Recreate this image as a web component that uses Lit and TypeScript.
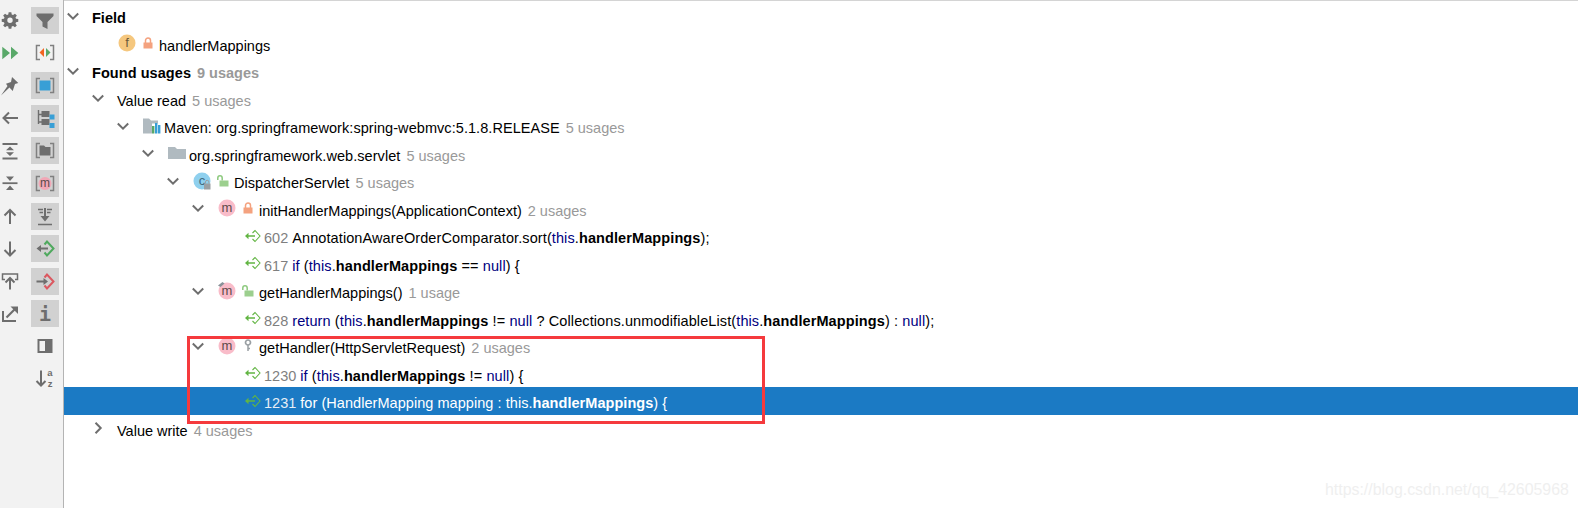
import { LitElement, html, css, svg } from "lit";
import { customElement } from "lit/decorators.js";

const G = "#6e6e6e";
const ic = (c: unknown) => html`<svg class="ov" width="20" height="20" viewBox="0 0 20 20">${c}</svg>`;
const bx = (c: unknown) => html`<svg width="28" height="27" viewBox="0 0 28 27">${c}</svg>`;

const brackets = svg`<path d="M9 6.500H5.500v14H9M19 6.500h3.500v14H19" fill="none" stroke="#808080" stroke-width="1.500"/>`;

const col1 = [
  ic(svg`<g transform="translate(1 1.200) scale(.9)"><path fill-rule="evenodd" fill="${G}" d="M8.500 1.500h3l.4 2.500 1.500.6 2.100-1.500 2.100 2.100-1.500 2.100.6 1.500 2.500.4v3l-2.500.4-.6 1.500 1.500 2.100-2.100 2.100-2.100-1.500-1.500.6-.4 2.500h-3l-.4-2.500-1.500-.6-2.100 1.500-2.100-2.100 1.500-2.100-.6-1.500-2.500-.4v-3l2.500-.4.6-1.500-1.500-2.100 2.100-2.100 2.100 1.500 1.500-.6zM10 7.400a3 3 0 1 0 0 6 3 3 0 0 0 0-6z" transform="translate(0 -.4)"/></g>`),
  ic(svg`<path fill="#59a869" d="M2.300 3.800l7.700 6.200-7.700 6.200zM11 3.800l7.300 6.200-7.300 6.200z"/>`),
  ic(svg`<path fill="${G}" d="M12 1l6.300 6-3.300 1-2.300 7-3.200-3.500L1 19.400l6.500-9.400L6 7.700 11 6z"/>`),
  ic(svg`<path fill="none" stroke="${G}" stroke-width="2" d="M18 10H3.500M9 4.500L3.500 10 9 15.500"/>`),
  ic(svg`<path fill="none" stroke="${G}" stroke-width="1.800" d="M2.500 3h15M2.500 17.500h15"/><path fill="${G}" d="M10 5.500l4 3.700H6zM10 15l-4-3.700h8z"/>`),
  ic(svg`<path fill="none" stroke="${G}" stroke-width="1.800" d="M2.500 10.200h15"/><path fill="${G}" d="M6 3.500h8l-4 4.500zM10 12.500l4 4.500H6z"/>`),
  ic(svg`<path fill="none" stroke="${G}" stroke-width="2" d="M10 18V4M4.500 9.500L10 4l5.500 5.500"/>`),
  ic(svg`<path fill="none" stroke="${G}" stroke-width="2" d="M10 2.500v14M4.500 11l5.500 5.500 5.500-5.500"/>`),
  ic(svg`<path fill="none" stroke="${G}" stroke-width="1.500" d="M5 8.500H2.500V3h15v5.500H15"/><path fill="none" stroke="${G}" stroke-width="2" d="M10 18.500V7.500M5.500 11.500L10 7l4.500 4.500"/>`),
  ic(svg`<path fill="none" stroke="${G}" stroke-width="2" d="M3 7v10h13"/><path fill="none" stroke="${G}" stroke-width="2.200" d="M6.500 13.500L16 4"/><path fill="${G}" d="M10.500 2.500H18V10z"/>`),
];

const col2 = [
  { on: true, i: bx(svg`<path fill="${G}" d="M5.500 6.500h17v2.500l-6 6v7l-5-2.500V15l-6-6z"/>`) },
  { on: false, i: bx(svg`${brackets}<path fill="#f26522" d="M13 9l-4.500 4.500L13 18z"/><path fill="#59a869" d="M15 9l4.500 4.500L15 18z"/>`) },
  { on: true, i: bx(svg`${brackets}<rect x="8.500" y="8.500" width="11" height="10" fill="#389fd6"/>`) },
  { on: true, i: bx(svg`<path fill="none" stroke="${G}" stroke-width="1.400" d="M7.500 5v14M7.500 9.500H11M7.500 17H11"/><rect x="10.500" y="6" width="8" height="6" fill="${G}"/><rect x="10.500" y="14" width="8" height="6" fill="${G}"/><rect x="18.500" y="9.500" width="5" height="5" fill="#389fd6"/><rect x="18.500" y="18" width="5" height="5" fill="#389fd6"/>`) },
  { on: true, i: bx(svg`${brackets}<path fill="${G}" d="M8.500 8.500h4.500l1.500 1.500h5v8.500h-11z"/>`) },
  { on: true, i: bx(svg`${brackets}<circle cx="14" cy="13.500" r="6.500" fill="#f1a7b6"/><text x="14" y="17" text-anchor="middle" class="svgt" fill="#5a4a4a" font-size="12">m</text>`) },
  { on: true, i: bx(svg`<path fill="none" stroke="${G}" stroke-width="1.500" d="M7 21.500h14M7 6.500h5M16 6.500h5M8.500 9.500h3.500M16 9.500h3.500"/><path fill="${G}" d="M13 5h2v8h3.500L14 18.500 9.500 13H13z"/>`) },
  { on: true, i: bx(svg`<path fill="none" stroke="#4fa95e" stroke-width="2" d="M13.500 9.500L16 6.500l6.500 7-6.500 7-2.500-3"/><path fill="${G}" d="M10 10v2.500h7v2h-7V17l-4.500-3.500z"/>`) },
  { on: true, i: bx(svg`<path fill="none" stroke="#db5860" stroke-width="2" d="M13.500 9.500L16 6.500l6.500 7-6.500 7-2.500-3"/><path fill="${G}" d="M12.500 10v2.500h-7v2h7V17l4.500-3.500z"/>`) },
  { on: true, i: bx(svg`<text x="14" y="21" text-anchor="middle" class="svgi" fill="${G}" font-size="20">i</text>`) },
  { on: false, i: bx(svg`<rect x="6.500" y="6" width="15" height="14" fill="${G}"/><rect x="8.500" y="8" width="5.500" height="10" fill="#f2f2f2"/>`) },
  { on: false, i: bx(svg`<path fill="none" stroke="${G}" stroke-width="2" d="M10 4.500v15M5.500 15L10 19.500l4.500-4.500"/><text x="19" y="9.500" text-anchor="middle" class="svgt svgb" fill="${G}" font-size="9.500">a</text><text x="19" y="20.500" text-anchor="middle" class="svgt svgb" fill="${G}" font-size="9.500">z</text>`) },
];

const lockRed = html`<svg width="10" height="12" viewBox="0 0 10 12"><path fill="none" stroke="#f4a27f" stroke-width="1.500" d="M2.500 6V3.500a2.500 2.500 0 0 1 5 0V6"/><rect x="0.500" y="5.500" width="9" height="6" fill="#f4a27f"/></svg>`;
const lockOpen = html`<svg width="12" height="12" viewBox="0 0 12 12"><path fill="none" stroke="#8cc97d" stroke-width="1.500" d="M.8 5V3a2.200 2.200 0 0 1 4.400 0v2.500"/><rect x="2.500" y="5.500" width="9" height="6" fill="#9ccf8e"/></svg>`;
const key = html`<svg width="8" height="13" viewBox="0 0 8 13"><circle cx="4" cy="3.500" r="2.500" fill="none" stroke="#9aa0a4" stroke-width="1.700"/><path d="M4 6v6M4 9.500h2" fill="none" stroke="#9aa0a4" stroke-width="1.500"/></svg>`;

const badge = (letter: string, fill: string, ink: string, extra: unknown = "") => html`<svg width="18" height="18" viewBox="0 0 18 18"><circle cx="9" cy="9" r="8.500" fill="${fill}"/><text x="9" y="13" text-anchor="middle" class="svgt" fill="${ink}" font-size="13">${letter}</text>${extra}</svg>`;
const bM = (pin = false) => badge("m", "#f9bcc9", "#5e4a4a", pin ? svg`<path d="M0 3.500L4.500 0l2 1.500-4 3.500z" fill="#8a9299"/>` : "");
const bF = badge("f", "#f5c77e", "#6b5a3a");
const bC = badge("c", "#8fd0ee", "#3f6a80", svg`<rect x="11" y="11.500" width="6.500" height="6" fill="#9aa0a4"/><path d="M12.500 11.500V10a1.700 1.700 0 0 1 3.400 0v1.500" fill="none" stroke="#9aa0a4"/>`);
const maven = html`<svg width="18" height="18" viewBox="0 0 18 18"><path fill="#b0bac0" d="M0 1.500h6l2 2h7v3H9v10H0z"/><rect x="9" y="9" width="2.400" height="7.500" fill="#59a869"/><rect x="12" y="6" width="2.400" height="10.500" fill="#389fd6"/><rect x="15" y="8" width="2.400" height="8.500" fill="#389fd6"/></svg>`;
const folder = html`<svg width="18" height="18" viewBox="0 0 18 18"><path fill="#b0bac0" d="M0 3h7l2 2h9v10H0z"/></svg>`;
const usageIc = html`<svg width="16" height="14" viewBox="0 0 16 14"><path fill="none" stroke="#62b543" stroke-width="1.100" d="M7.500 4L10 1.500 15 7l-5 5.500L7.500 10"/><path fill="#62b543" d="M3.500 3.800v2.500H10v1.400H3.500v2.500L0 7z"/></svg>`;

const B = (t: string) => html`<b>${t}</b>`;
const K = (t: string) => html`<span class="kw">${t}</span>`;
const HM = B("handlerMappings");

type Row = {
  d: number; open?: boolean; closed?: boolean; icon?: unknown; vis?: unknown; kind?: string;
  label?: unknown; bold?: boolean; n?: string; sel?: boolean; line?: string; code?: unknown; wide?: boolean;
};

const rows: Row[] = [
  { d: 0, open: true, label: "Field", bold: true },
  { d: 1, kind: "member", icon: bF, vis: lockRed, label: "handlerMappings" },
  { d: 0, open: true, label: "Found usages", bold: true, n: "9 usages", wide: true },
  { d: 1, open: true, label: "Value read", n: "5 usages" },
  { d: 2, open: true, kind: "file", icon: maven, label: "Maven: org.springframework:spring-webmvc:5.1.8.RELEASE", n: "5 usages", wide: true },
  { d: 3, open: true, kind: "file", icon: folder, label: "org.springframework.web.servlet", n: "5 usages", wide: true },
  { d: 4, open: true, kind: "member", icon: bC, vis: lockOpen, label: "DispatcherServlet", n: "5 usages", wide: true },
  { d: 5, open: true, kind: "member", icon: bM(), vis: lockRed, label: "initHandlerMappings(ApplicationContext)", n: "2 usages" },
  { d: 6, line: "602", code: html`AnnotationAwareOrderComparator.sort(${K("this")}.${HM});` },
  { d: 6, line: "617", code: html`${K("if")} (${K("this")}.${HM} == ${K("null")}) {` },
  { d: 5, open: true, kind: "member", icon: bM(true), vis: lockOpen, label: "getHandlerMappings()", n: "1 usage" },
  { d: 6, line: "828", code: html`${K("return")} (${K("this")}.${HM} != ${K("null")} ? Collections.unmodifiableList(${K("this")}.${HM}) : ${K("null")});` },
  { d: 5, open: true, kind: "member", icon: bM(), vis: key, label: "getHandler(HttpServletRequest)", n: "2 usages" },
  { d: 6, line: "1230", code: html`${K("if")} (${K("this")}.${HM} != ${K("null")}) {` },
  { d: 6, sel: true, line: "1231", code: html`${K("for")} (HandlerMapping mapping : ${K("this")}.${HM}) {` },
  { d: 1, closed: true, label: "Value write", n: "4 usages" },
];

@customElement("app-root")
export class AppRoot extends LitElement {
  static styles = css`
    :host { display: block; height: 508px; overflow: hidden; position: relative; background: #fff;
      font-family: "Liberation Sans", Arial, sans-serif; font-size: 14.5px; color: #000; }
    .page { display: flex; height: 100%; }
    .side { width: 63px; height: 504px; flex: none; box-sizing: content-box; background: #f2f2f2; border-right: 1px solid #b4b4b4;
      padding-top: 4px; display: grid; grid-template-columns: 20px 28px; column-gap: 11px; align-content: start; }
    .col { display: flex; flex-direction: column; }
    .cell { height: 32.63px; display: flex; align-items: center; justify-content: center; }
    .ov { overflow: visible; }
    .tool { width: 28px; height: 27px; display: block; }
    .tool svg { display: block; }
    .tool.on { background: #d1d1d1; }
    .tree { flex: 1; min-width: 0; border-top: 1px solid #d4d4d4; padding-top: 1px; }
    .row { height: 27.5px; display: flex; align-items: center; white-space: pre; }
    .row.sel { background: #1b7ac4; color: #fff; }
    .chev { width: 16px; height: 16px; flex: none; }
    .chev svg { display: block; }
    .slot { flex: none; display: flex; align-items: center; justify-content: center; }
    .lead { margin-left: 12px; width: 18px; height: 18px; }
    .vis { width: 23px; height: 18px; }
    .file-gap { margin-right: 3px; }
    .plain { margin-left: 11px; }
    .use { margin-left: 14px; width: 16px; margin-right: 3px; }
    .txt { margin-top: 5px; display: flex; }
    .txt.wide { letter-spacing: .06px; }
    .ln { color: #7f7f7f; margin-right: 4px; }
    .sel .ln { color: #e6eef6; }
    .code { letter-spacing: .1px; }
    .sel .code { letter-spacing: .05px; }
    .n { color: #999; margin-left: 6px; letter-spacing: 0; }
    .strong { font-weight: 700; }
    .kw { color: #000080; }
    .sel .kw { color: #fff; }
    .svgt { font-family: "Liberation Sans", Arial, sans-serif; }
    .svgb { font-weight: 700; }
    .svgi { font-family: "DejaVu Sans Mono", monospace; font-weight: 700; }
    .mark { position: absolute; left: 1325px; top: 481px; font-size: 15.9px; color: #efefef; white-space: nowrap; }
    .callout { position: absolute; left: 187px; top: 336px; width: 578px; height: 88px; box-sizing: border-box; border: 3px solid #f53a3d; pointer-events: none; }
  `;

  private chevron(r: Row) {
    if (r.open) return html`<span class="chev"><svg width="16" height="16" viewBox="0 0 16 16"><path d="M2.800 5.500L8 10.700l5.200-5.200" fill="none" stroke="#6e6e6e" stroke-width="2"/></svg></span>`;
    if (r.closed) return html`<span class="chev"><svg width="16" height="16" viewBox="0 0 16 16"><path d="M5.500 2.800L10.700 8l-5.200 5.200" fill="none" stroke="#6e6e6e" stroke-width="2"/></svg></span>`;
    return html`<span class="chev"></span>`;
  }

  private renderRow(r: Row) {
    const indent = 1 + 25 * r.d;
    const n = r.n ? html`<span class="n">${r.n}</span>` : "";
    const w = r.wide ? "wide" : "";
    let body: unknown;
    if (r.line) {
      body = html`<span class="slot use">${usageIc}</span><span class="txt"><span class="ln">${r.line}</span><span class="code">${r.code}</span></span>`;
    } else if (r.kind === "member") {
      body = html`<span class="slot lead">${r.icon}</span><span class="slot vis">${r.vis}</span><span class="txt ${w}"><span>${r.label}</span>${n}</span>`;
    } else if (r.kind === "file") {
      body = html`<span class="slot lead file-gap">${r.icon}</span><span class="txt ${w}"><span>${r.label}</span>${n}</span>`;
    } else {
      body = html`<span class="txt plain ${w} ${r.bold ? "strong" : ""}"><span>${r.label}</span>${n}</span>`;
    }
    return html`<div class="row ${r.sel ? "sel" : ""}" style="padding-left:${indent}px">${this.chevron(r)}${body}</div>`;
  }

  render() {
    return html`
      <div class="page">
        <aside class="side">
          <div class="col">${col1.map((i) => html`<div class="cell">${i}</div>`)}</div>
          <div class="col">${col2.map((t) => html`<div class="cell"><span class="tool ${t.on ? "on" : ""}">${t.i}</span></div>`)}</div>
        </aside>
        <main class="tree">${rows.map((r) => this.renderRow(r))}</main>
      </div>
      <div class="callout"></div>
      <div class="mark">https://blog.csdn.net/qq_42605968</div>
    `;
  }
}
